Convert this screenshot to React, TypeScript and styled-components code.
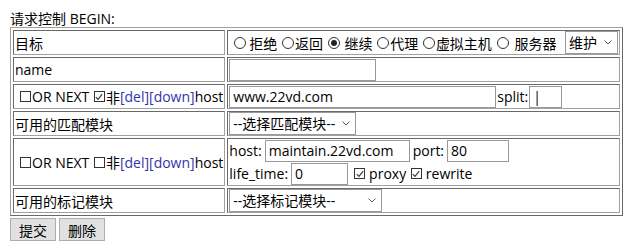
import styled, { createGlobalStyle } from 'styled-components'

const GlobalStyle = createGlobalStyle`
    body {
        margin: 0;
        padding: 7px 10px;
        background: #fff;
        color: #000;
        font-family: "Open Sans", "Noto Sans CJK SC", sans-serif;
        font-size: 14px;
    }
`

const Title = styled.div`
    line-height: 21px;
    height: 20px;
    padding-top: 1px;
    box-sizing: border-box;
`

const Table = styled.table`
    width: 613px;
    border-collapse: separate;
    border-spacing: 2px;
    border: 1px solid;
    border-color: #a0a0a0 #696969 #696969 #a0a0a0;
`

const Cell = styled.td<{ $label?: boolean }>`
    border: 1px solid;
    border-color: #696969 #a0a0a0 #a0a0a0 #696969;
    padding: 0 1px;
    height: 23px;
    white-space: nowrap;
    vertical-align: middle;
    width: ${p => (p.$label ? '1px' : 'auto')};
`

const Line = styled.div<{ $gap?: number; $spread?: boolean }>`
    display: flex;
    align-items: center;
    gap: ${p => p.$gap ?? 3}px;
    justify-content: ${p => (p.$spread ? 'space-between' : 'flex-start')};
    height: 23px;
`

const Link = styled.a`
    color: #3333aa;
    text-decoration: none;
`

const Field = styled.input<{ $w: number }>`
    width: ${p => p.$w}px;
    height: 22px;
    box-sizing: border-box;
    border: 1px solid #999;
    padding: 0 3px;
    font: inherit;
    color: #000;
    outline: none;
    margin: 0;
`

const SelectWrap = styled.span`
    position: relative;
    display: inline-flex;
`

const Select = styled.select<{ $w: number }>`
    appearance: none;
    width: ${p => p.$w}px;
    height: 23px;
    box-sizing: border-box;
    border: 1px solid #999;
    background: #fff;
    padding: 0 16px 0 3px;
    font: inherit;
    color: #000;
    margin: 0;
`

const Chevron = styled.svg`
    position: absolute;
    right: 6px;
    top: 9px;
    pointer-events: none;
`

const Box = styled.span<{ $after?: number }>`
    display: inline-flex;
    flex: none;
    width: 11px;
    height: 11px;
    box-sizing: border-box;
    border: 1px solid #333;
    align-items: center;
    justify-content: center;
    margin: 0 ${p => p.$after ?? 1}px 0 1px;
`

const Round = styled.span<{ $after?: number }>`
    display: inline-flex;
    flex: none;
    width: 12px;
    height: 12px;
    box-sizing: border-box;
    border: 1px solid #333;
    border-radius: 50%;
    align-items: center;
    justify-content: center;
    margin: 0 ${p => p.$after ?? 1}px 0 1px;
`

const Dot = styled.span`
    width: 6px;
    height: 6px;
    border-radius: 50%;
    background: #222;
`

const Options = styled.span<{ $indent?: number }>`
    display: inline-flex;
    align-items: center;
    white-space: pre;
    padding-left: ${p => p.$indent ?? 0}px;
`

const Button = styled.button`
    font: inherit;
    background: #e1e1e1;
    border: 1px solid #adadad;
    padding: 0 8px;
    height: 23px;
    margin: 2px 3px 0 0;
    color: #000;
`

const Check = ({ on, after }: { on?: boolean; after?: number }) => (
    <Box $after={after}>
        {on && (
            <svg width="8" height="8" viewBox="0 0 8 8">
                <path d="M0.8 4.2 L3 6.4 L7.2 1.2" fill="none" stroke="#333" strokeWidth="1.1" />
            </svg>
        )}
    </Box>
)

const Radio = ({ on, after }: { on?: boolean; after?: number }) => (
    <Round $after={after}>{on && <Dot />}</Round>
)

const Dropdown = ({ w, value }: { w: number; value: string }) => (
    <SelectWrap>
        <Select $w={w} defaultValue={value}>
            <option>{value}</option>
        </Select>
        <Chevron width="8" height="5" viewBox="0 0 8 5">
            <path d="M0.5 0.5 L4 4 L7.5 0.5" fill="none" stroke="#555" strokeWidth="1" />
        </Chevron>
    </SelectWrap>
)

const RuleLabel = ({ not }: { not?: boolean }) => (
    <Options $indent={4}>
        <Check />OR NEXT <Check on={not} />非<Link href="#">[del]</Link><Link href="#">[down]</Link>host
    </Options>
)

const App = () => {
    return (
        <>
            <GlobalStyle />
            <Title>请求控制 BEGIN:</Title>
            <Table>
                <tbody>
                    <tr>
                        <Cell $label>目标</Cell>
                        <Cell>
                            <Line $gap={0} $spread>
                                <Options $indent={4}>
                                    <Radio after={3} />拒绝 <Radio />返回 <Radio on after={5} />继续 <Radio />代理 <Radio />虚拟主机 <Radio after={6} />服务器
                                </Options>
                                <Dropdown w={53} value="维护" />
                            </Line>
                        </Cell>
                    </tr>
                    <tr>
                        <Cell $label>name</Cell>
                        <Cell><Line><Field $w={147} /></Line></Cell>
                    </tr>
                    <tr>
                        <Cell $label><RuleLabel not /></Cell>
                        <Cell>
                            <Line $gap={1}>
                                <Field $w={267} defaultValue="www.22vd.com" />
                                split:<Field $w={33} defaultValue="|" />
                            </Line>
                        </Cell>
                    </tr>
                    <tr>
                        <Cell $label>可用的匹配模块</Cell>
                        <Cell><Line><Dropdown w={127} value="--选择匹配模块--" /></Line></Cell>
                    </tr>
                    <tr>
                        <Cell $label><RuleLabel /></Cell>
                        <Cell>
                            <Line>
                                host:<Field $w={145} defaultValue="maintain.22vd.com" />
                                port:<Field $w={62} defaultValue="80" />
                            </Line>
                            <Line>
                                life_time:<Field $w={57} defaultValue="0" />
                                <Options $indent={2}><Check on after={4} />proxy <Check on after={4} />rewrite</Options>
                            </Line>
                        </Cell>
                    </tr>
                    <tr>
                        <Cell $label>可用的标记模块</Cell>
                        <Cell><Line><Dropdown w={153} value="--选择标记模块--" /></Line></Cell>
                    </tr>
                </tbody>
            </Table>
            <Button>提交</Button>
            <Button>删除</Button>
        </>
    )
}

export default App
